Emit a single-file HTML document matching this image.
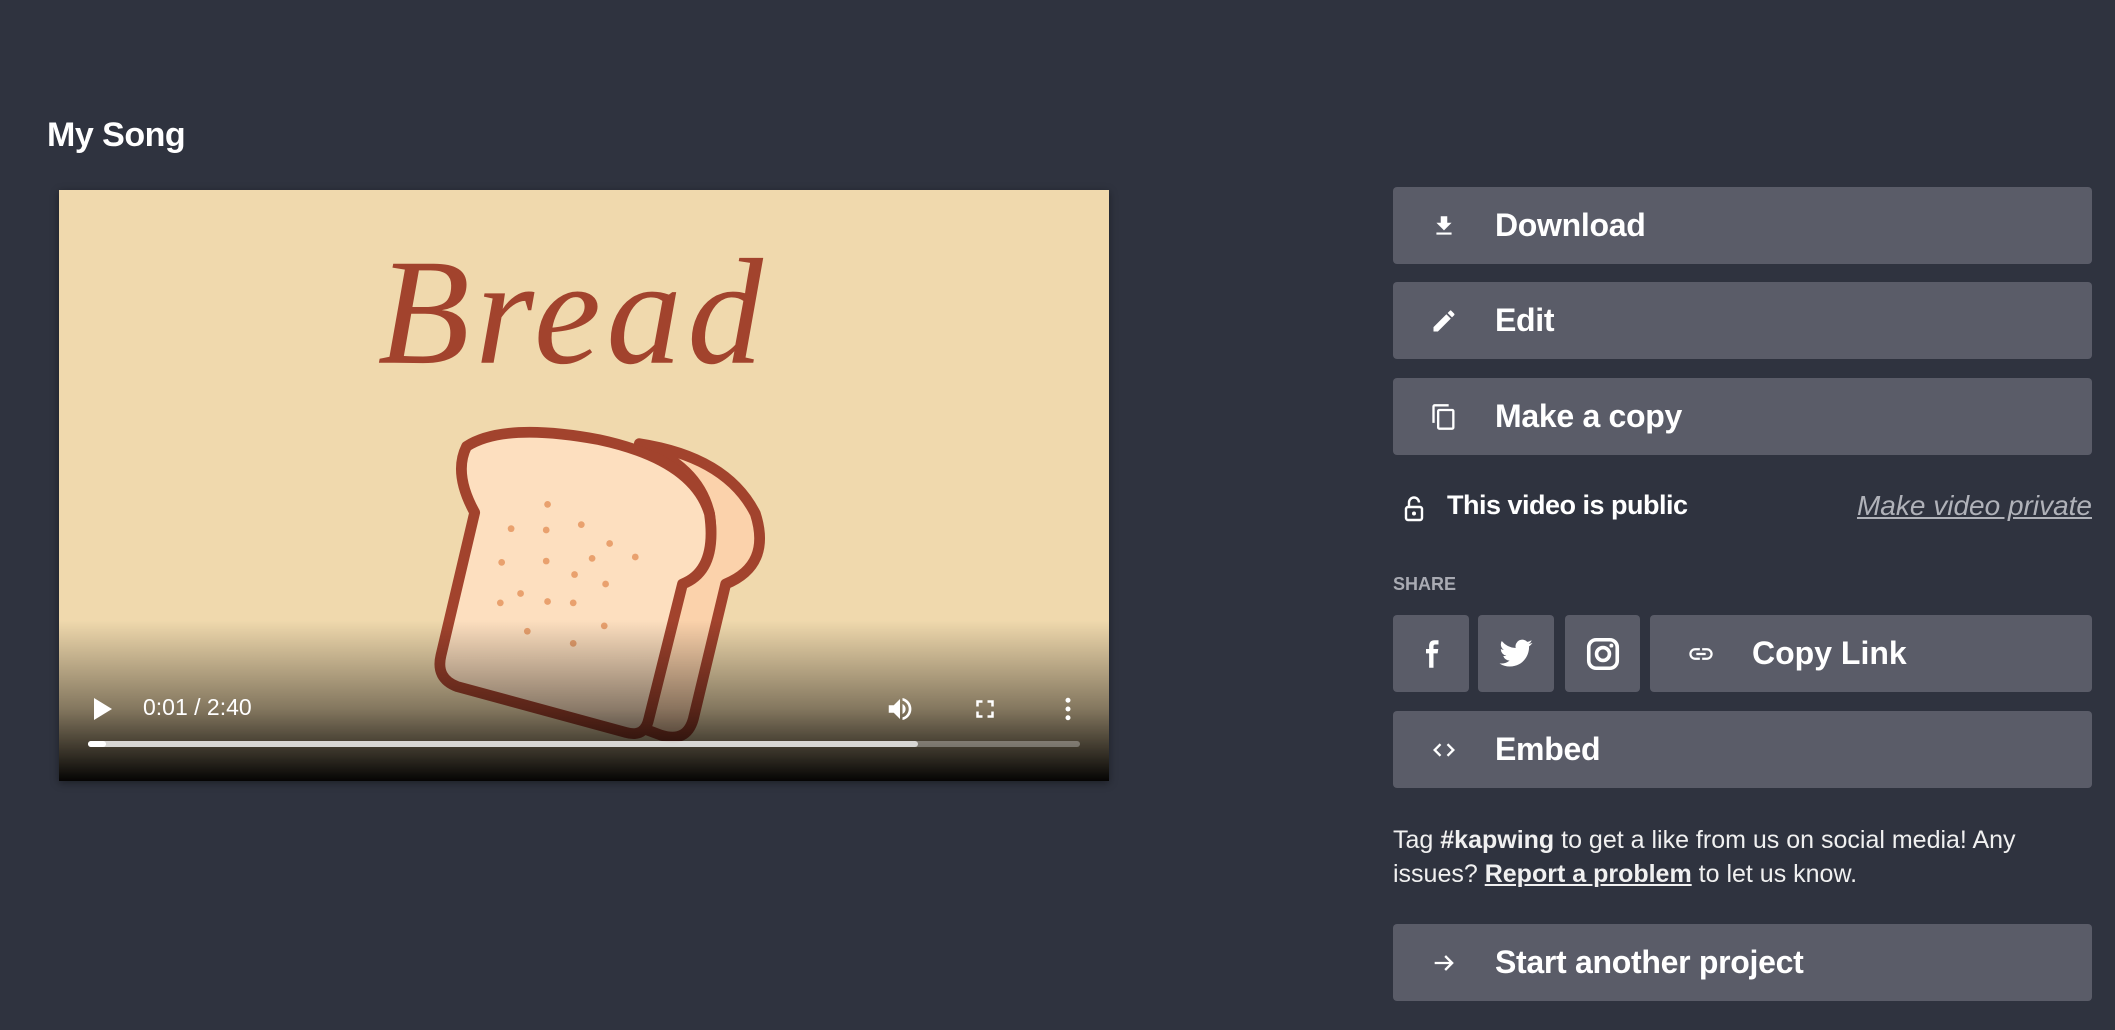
<!DOCTYPE html>
<html><head><meta charset="utf-8"><style>
*{margin:0;padding:0;box-sizing:border-box}
body{width:2115px;height:1030px;background:#2f333f;font-family:"Liberation Sans",sans-serif;color:#fff;position:relative;overflow:hidden}
.title{position:absolute;left:47px;top:116px;font-size:34px;font-weight:bold;letter-spacing:-0.5px}
.video{position:absolute;left:59px;top:190px;width:1050px;height:591px;background:#f0d9ad;overflow:hidden;box-shadow:0 2px 8px rgba(0,0,0,.4)}
.grad{position:absolute;left:0;top:430px;width:1050px;height:161px;background:linear-gradient(rgba(0,0,0,0),rgba(0,0,0,.45) 55%,rgba(0,0,0,.98))}
.btn{position:absolute;left:1393px;width:699px;height:77px;background:#5a5c68;border-radius:4px;font-size:32px;font-weight:bold;display:flex;align-items:center}
.btn .ic{width:102px;display:flex;justify-content:center;padding-left:0}
.btn .t{letter-spacing:-0.3px}
.sq{position:absolute;top:615px;height:77px;background:#5a5c68;border-radius:4px;display:flex;align-items:center;justify-content:center}
p.info{position:absolute;left:1393px;top:823px;width:660px;font-size:25px;line-height:34px;color:#f0f0f0}
</style></head><body>
<div class="title">My Song</div>
<div class="video">
<svg width="1050" height="591" viewBox="0 0 778 438" preserveAspectRatio="none" style="position:absolute;left:0;top:0">
<text x="236" y="128" font-family="Liberation Serif,serif" font-style="italic" font-size="112" fill="#a2432d" letter-spacing="4">Bread</text>
<path d="M430,188 Q495,198 516,240 Q528,278 494,292 L470,392 Q465,410 446,404 L430,398 L460,290 Q488,280 482,240 Q474,205 430,188 Z" fill="#fbd2ab" stroke="#a2432d" stroke-width="8" stroke-linejoin="round"/>
<path d="M308,239 L283,345 Q279,362 295,368 L420,402 Q434,406 437,392 L462,292 Q488,282 482,240 Q470,200 400,185 Q330,172 302,190 Q292,210 308,239 Z" fill="#fddfbf" stroke="#a2432d" stroke-width="8" stroke-linejoin="round"/>
<g fill="#e9a16e">
<circle cx="362" cy="233" r="2.5"/><circle cx="335" cy="251" r="2.5"/><circle cx="361" cy="252" r="2.5"/><circle cx="387" cy="248" r="2.5"/><circle cx="408" cy="262" r="2.5"/><circle cx="395" cy="273" r="2.5"/><circle cx="427" cy="272" r="2.5"/><circle cx="328" cy="276" r="2.5"/><circle cx="361" cy="275" r="2.5"/><circle cx="382" cy="285" r="2.5"/><circle cx="405" cy="292" r="2.5"/><circle cx="342" cy="299" r="2.5"/><circle cx="327" cy="306" r="2.5"/><circle cx="362" cy="305" r="2.5"/><circle cx="381" cy="306" r="2.5"/><circle cx="347" cy="327" r="2.5"/><circle cx="404" cy="323" r="2.5"/><circle cx="381" cy="336" r="2.5"/>
</g></svg>
<div class="grad"></div>
<svg style="position:absolute;left:33px;top:507px" width="22" height="24" viewBox="0 0 22 24"><path d="M2 1 L20 12 L2 23Z" fill="#fff"/></svg>
<div style="position:absolute;left:84px;top:504px;font-size:23px;color:#fff">0:01 / 2:40</div>
<svg style="position:absolute;left:826px;top:504px" width="30" height="30" viewBox="0 0 24 24"><path d="M3 9v6h4l5 5V4L7 9H3zm13.5 3A4.5 4.5 0 0 0 14 8v8a4.5 4.5 0 0 0 2.5-4zM14 3.2v2.1a7 7 0 0 1 0 13.4v2.1a9 9 0 0 0 0-17.6z" fill="#fff"/></svg>
<svg style="position:absolute;left:911px;top:504px" width="30" height="30" viewBox="0 0 24 24"><path d="M7 14H5v5h5v-2H7v-3zm-2-4h2V7h3V5H5v5zm12 7h-3v2h5v-5h-2v3zM14 5v2h3v3h2V5h-5z" fill="#fff"/></svg>
<svg style="position:absolute;left:994px;top:504px" width="30" height="30" viewBox="0 0 24 24"><circle cx="12" cy="5" r="2" fill="#fff"/><circle cx="12" cy="12" r="2" fill="#fff"/><circle cx="12" cy="19" r="2" fill="#fff"/></svg>
<div style="position:absolute;left:29px;top:551px;width:992px;height:6px;border-radius:3px;background:rgba(255,255,255,.3)"></div>
<div style="position:absolute;left:29px;top:551px;width:830px;height:6px;border-radius:3px;background:rgba(255,255,255,.7)"></div>
<div style="position:absolute;left:29px;top:551px;width:18px;height:6px;border-radius:3px;background:#fff"></div>
</div>

<div class="btn" style="top:187px"><div class="ic"><svg width="26" height="26" viewBox="0 0 24 24"><path d="M19 9h-4V3H9v6H5l7 7 7-7zM5 18v2h14v-2H5z" fill="#fff"/></svg></div><span class="t">Download</span></div>
<div class="btn" style="top:282px"><div class="ic"><svg width="28" height="28" viewBox="0 0 24 24"><path d="M3 17.25V21h3.75L17.8 9.94l-3.75-3.750L3 17.25zM20.7 7.04a1 1 0 0 0 0-1.41l-2.34-2.34a1 1 0 0 0-1.41 0l-1.830 1.83 3.75 3.75 1.83-1.83z" fill="#fff"/></svg></div><span class="t">Edit</span></div>
<div class="btn" style="top:378px"><div class="ic"><svg width="28" height="28" viewBox="0 0 24 24"><path d="M16 1H4a2 2 0 0 0-2 2v14h2V3h12V1zm3 4H8a2 2 0 0 0-2 2v14a2 2 0 0 0 2 2h11a2 2 0 0 0 2-2V7a2 2 0 0 0-2-2zm0 16H8V7h11v14z" fill="#fff"/></svg></div><span class="t">Make a copy</span></div>

<svg style="position:absolute;left:1404px;top:496px" width="20" height="26" viewBox="0 0 20 26"><path d="M5 11V6.5a5 5 0 0 1 10 0" fill="none" stroke="#fff" stroke-width="2.4"/><rect x="2" y="11" width="16" height="13" rx="2" fill="none" stroke="#fff" stroke-width="2.4"/><circle cx="10" cy="17.5" r="2" fill="#fff"/></svg>
<div style="position:absolute;left:1447px;top:490px;font-size:27px;font-weight:bold;letter-spacing:-0.5px">This video is public</div>
<div style="position:absolute;right:23px;top:490px;font-size:28px;font-style:italic;text-decoration:underline;color:#b0b2b9">Make video private</div>
<div style="position:absolute;left:1393px;top:574px;font-size:18px;font-weight:bold;color:#a9abb3">SHARE</div>

<div class="sq" style="left:1393px;width:76px"><svg width="30" height="36" viewBox="0 0 24 24"><path d="M14 8V6c0-1 .4-1.6 1.7-1.6H18V1h-3.2C11.5 1 10.5 3 10.5 6v2H8v3.5h2.5V23H14V11.5h3.3l.5-3.5H14z" fill="#fff"/></svg></div>
<div class="sq" style="left:1478px;width:76px"><svg width="36" height="36" viewBox="0 0 24 24"><path d="M23 4.6a9 9 0 0 1-2.6.7 4.5 4.5 0 0 0 2-2.5 9 9 0 0 1-2.9 1.1A4.5 4.5 0 0 0 11.8 8 12.8 12.8 0 0 1 2.5 3.3a4.5 4.5 0 0 0 1.4 6 4.5 4.5 0 0 1-2-.6 4.5 4.5 0 0 0 3.6 4.5 4.5 4.5 0 0 1-2 .1 4.5 4.5 0 0 0 4.2 3.1A9 9 0 0 1 1 18.3 12.8 12.8 0 0 0 7.9 20.3c8.3 0 12.8-6.9 12.8-12.8v-.6A9 9 0 0 0 23 4.6z" fill="#fff"/></svg></div>
<div class="sq" style="left:1565px;width:75px"><svg width="36" height="36" viewBox="0 0 24 24"><rect x="2.5" y="2.5" width="19" height="19" rx="5" fill="none" stroke="#fff" stroke-width="2.4"/><circle cx="12" cy="12" r="4.3" fill="none" stroke="#fff" stroke-width="2.4"/><circle cx="17.6" cy="6.4" r="1.3" fill="#fff"/></svg></div>
<div class="sq" style="left:1650px;width:442px;justify-content:flex-start;font-size:32px;font-weight:bold"><div style="width:102px;display:flex;justify-content:center"><svg width="28" height="28" viewBox="0 0 24 24"><path d="M3.9 12c0-1.7 1.4-3.1 3.1-3.1h4V7H7a5 5 0 0 0 0 10h4v-1.9H7c-1.7 0-3.1-1.4-3.1-3.1zM8 13h8v-2H8v2zm9-6h-4v1.9h4c1.7 0 3.1 1.4 3.1 3.1s-1.4 3.1-3.1 3.1h-4V17h4a5 5 0 0 0 0-10z" fill="#fff"/></svg></div><span>Copy Link</span></div>

<div class="btn" style="top:711px"><div class="ic"><svg width="28" height="28" viewBox="0 0 24 24"><path d="M9 7l-5 5 5 5M15 7l5 5-5 5" fill="none" stroke="#fff" stroke-width="2"/></svg></div><span class="t">Embed</span></div>

<p class="info">Tag <b>#kapwing</b> to get a like from us on social media! Any issues? <b style="text-decoration:underline">Report a problem</b> to let us know.</p>

<div class="btn" style="top:924px"><div class="ic"><svg width="28" height="28" viewBox="0 0 24 24"><path d="M4 12h15M13 6l6 6-6 6" fill="none" stroke="#fff" stroke-width="2"/></svg></div><span class="t">Start another project</span></div>
</body></html>
